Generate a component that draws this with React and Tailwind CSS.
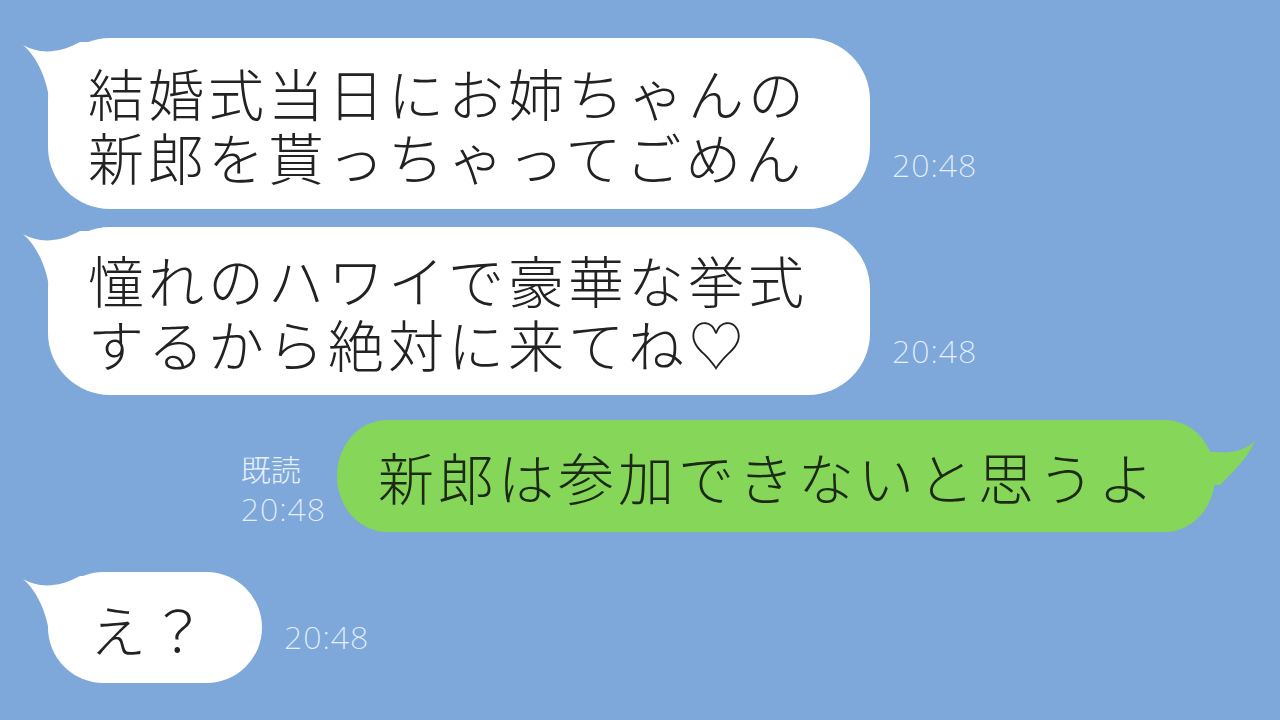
import React from "react";

const jp = { fontFamily: '"Noto Sans CJK JP", "Noto Sans", sans-serif' };
const num = { fontFamily: '"Noto Sans", "Noto Sans CJK JP", sans-serif' };

// tail on the top-left of an incoming bubble
const LeftTail = () => (
  <svg className="absolute left-[-28px] top-[-2px]" width="80" height="70" viewBox="0 0 80 70">
    <path d="M3 9 C15 16 35 20 60 6 L80 6 L80 70 L30 70 C28 45 18 22 3 9 Z" fill="#ffffff" />
  </svg>
);

// tail on the right side of the outgoing (green) bubble
const RightTail = () => (
  <svg className="absolute right-[-45px] top-[10px]" width="70" height="70" viewBox="0 0 70 70">
    <path d="M10 22 L25 22 C40 24 58 20 65 10 C60 25 45 40 30 55 L10 55 Z" fill="#86d65a" />
  </svg>
);

const Time = ({ children, className = "" }) => (
  <div className={`text-[32px] leading-none font-extralight text-[#e8f0fa] tracking-[1px] ${className}`} style={num}>
    {children}
  </div>
);

const Line = ({ children, color = "text-[#222]" }) => (
  <div className={`h-[64px] leading-[64px] whitespace-nowrap text-[56px] tracking-[4px] font-light ${color}`}>
    {children}
  </div>
);

export default function App() {
  return (
    <div className="w-[1280px] h-[720px] overflow-hidden bg-[#7ea8da] pt-[38px] flex flex-col" style={jp}>
      {/* message 1 */}
      <div className="flex items-end pl-[48px]">
        <div className="relative w-[822px] h-[171px] bg-white rounded-[62px] flex items-center pl-[40px]">
          <LeftTail />
          <div className="relative">
            <Line>結婚式当日にお姉ちゃんの</Line>
            <Line>新郎を貰っちゃってごめん</Line>
          </div>
        </div>
        <Time className="ml-[22px] mb-[28px]">20:48</Time>
      </div>

      {/* message 2 */}
      <div className="flex items-end pl-[48px] mt-[18px]">
        <div className="relative w-[822px] h-[168px] bg-white rounded-[62px] flex items-center pl-[40px]">
          <LeftTail />
          <div className="relative">
            <Line>憧れのハワイで豪華な挙式</Line>
            <Line>するから絶対に来てね♡</Line>
          </div>
        </div>
        <Time className="ml-[22px] mb-[28px]">20:48</Time>
      </div>

      {/* my reply */}
      <div className="flex items-end justify-end pr-[65px] mt-[25px]">
        <div className="flex flex-col items-start gap-[10px] mr-[11px] mb-[7px]">
          <div className="text-[30px] leading-none font-extralight text-[#e8f0fa]" style={jp}>既読</div>
          <Time>20:48</Time>
        </div>
        <div className="relative w-[878px] h-[112px] bg-[#86d65a] rounded-[50px/56px] flex items-center pl-[41px]">
          <RightTail />
          <div className="relative">
            <Line color="text-[#1c2a14]">新郎は参加できないと思うよ</Line>
          </div>
        </div>
      </div>

      {/* message 3 */}
      <div className="flex items-end pl-[48px] mt-[40px]">
        <div className="relative w-[214px] h-[111px] bg-white rounded-[56px] flex items-center pl-[42px]">
          <LeftTail />
          <div className="relative">
            <Line>え？</Line>
          </div>
        </div>
        <Time className="ml-[22px] mb-[30px]">20:48</Time>
      </div>
    </div>
  );
}
